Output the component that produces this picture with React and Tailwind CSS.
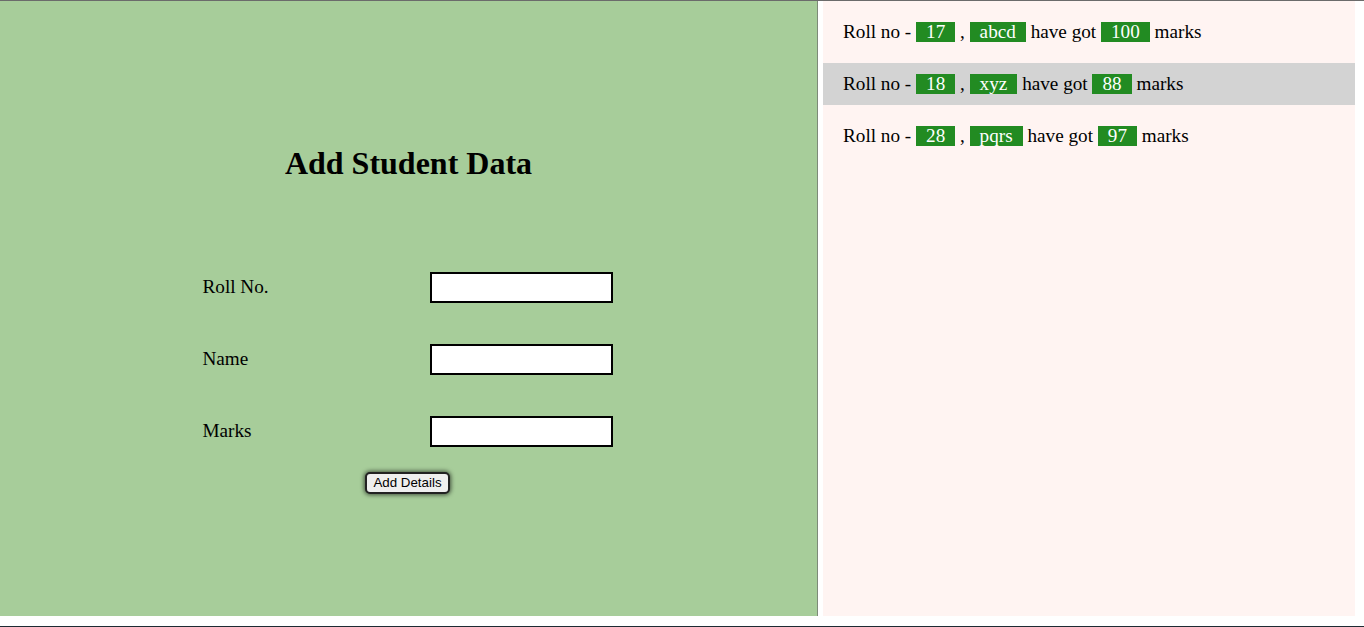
const students = [
  { roll: 17, name: "abcd", marks: 100 },
  { roll: 18, name: "xyz", marks: 88 },
  { roll: 28, name: "pqrs", marks: 97 },
];

function Badge({ children }) {
  return (
    <span className="inline-block bg-[#228b22] text-white px-[10px] leading-[20px]">
      {children}
    </span>
  );
}

export default function App() {
  return (
    <div
      className="w-[1364px] h-[627px] bg-white flex flex-col"
      style={{ fontFamily: '"Liberation Serif", "Times New Roman", serif' }}
    >
      <div className="h-px bg-[#6b6b6b]" />
      <div className="flex h-[615px]">
        <div className="w-[818px] bg-[#a7cd9a] border-r border-[#7d8a78] flex flex-col items-center pt-[144px] pr-[2px]">
          <h1 className="text-[32px] font-bold leading-[37px] text-black ml-[2px]">
            Add Student Data
          </h1>

          <div className="mt-[90px] grid grid-cols-[227px_183px] gap-y-[41px] text-[19.2px] text-black">
            <label className="flex items-center h-[31px]">Roll No.</label>
            <input className="h-[31px] w-[183px] bg-white border-2 border-black" />
            <label className="flex items-center h-[31px]">Name</label>
            <input className="h-[31px] w-[183px] bg-white border-2 border-black" />
            <label className="flex items-center h-[31px]">Marks</label>
            <input className="h-[31px] w-[183px] bg-white border-2 border-black" />
          </div>

          <button
            className="mt-[25px] h-[22px] px-[6px] bg-[#efefef] border-2 border-[#222] rounded-[5px] shadow-[0_0_4px_1px_rgba(0,0,0,0.6)] text-[13.33px] text-black leading-none"
            style={{ fontFamily: '"Liberation Sans", Arial, sans-serif' }}
          >
            Add Details
          </button>
        </div>

        <div className="ml-[5px] w-[532px] bg-[#fff4f2] pt-[10px] flex flex-col gap-[10px] text-[19.2px] text-black">
          {students.map((s, i) => (
            <div
              key={s.roll}
              className={
                "h-[42px] px-5 flex items-center whitespace-pre " +
                (i === 1 ? "bg-[#d3d3d3]" : "")
              }
            >
              <span>Roll no - </span>
              <Badge>{s.roll}</Badge>
              <span> , </span>
              <Badge>{s.name}</Badge>
              <span> have got </span>
              <Badge>{s.marks}</Badge>
              <span> marks</span>
            </div>
          ))}
        </div>
      </div>
      <div className="flex-1" />
      <div className="h-px bg-[#1e2a33]" />
    </div>
  );
}
